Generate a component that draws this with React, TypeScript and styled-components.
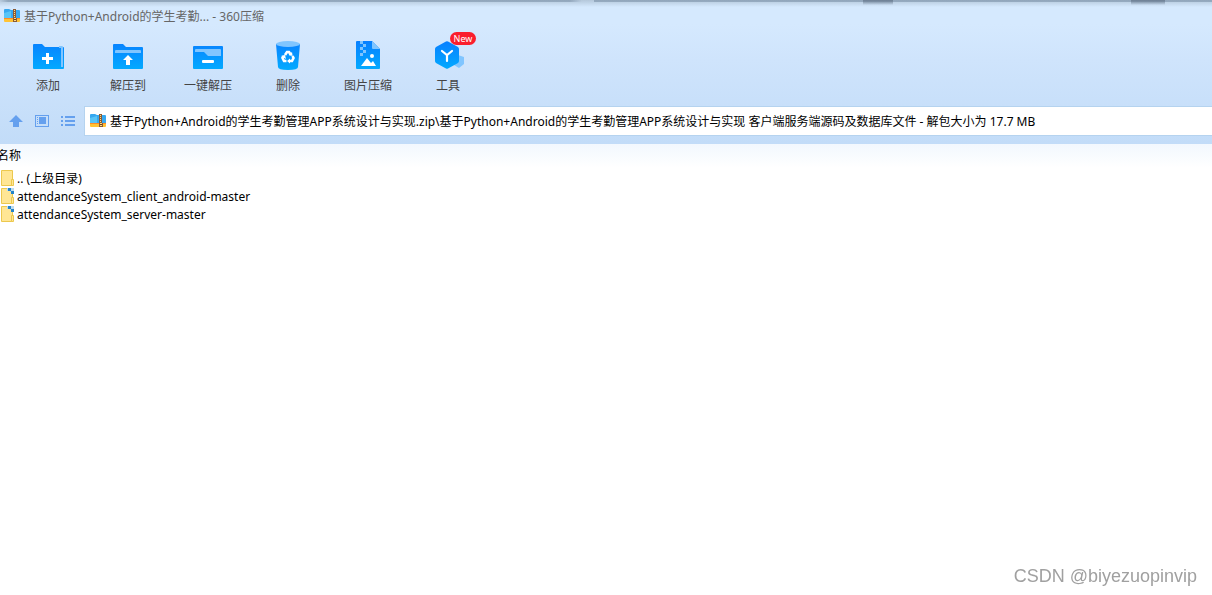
import React from "react";
import styled, { createGlobalStyle } from "styled-components";

const GlobalStyle = createGlobalStyle`
  * { box-sizing: border-box; }
  html, body, #root { height: 100%; }
  body {
    margin: 0;
    background: #fff;
    color: #000;
    font: 12px/18px "Noto Sans", "Noto Sans CJK SC", sans-serif;
  }
  button, input { font: inherit; }
  svg { display: block; flex: none; }
`;

const Window = styled.div`
  min-height: 100%;
  display: flex;
  flex-direction: column;
  overflow: hidden;
`;

const Header = styled.header`
  padding-bottom: 8px;
  background:
    radial-gradient(closest-side at 50% 0, #4c648288, transparent) 23% 0 / 16px 6px no-repeat,
    linear-gradient(#6e8095, #6e809500) 73% 0 / 30px 5px no-repeat,
    linear-gradient(#6e8095, #6e809500) 96% 0 / 34px 5px no-repeat,
    linear-gradient(90deg, transparent, #69809877 8px, #69809877 47%, transparent 48%, transparent 49%, #69809877 49%) 0 0 / 100% 2px no-repeat,
    linear-gradient(#b4c7da, #d5e9fe 7px, #d5e9fe 24px, #cfe4fc 60px, #c2dcf8 100%);
`;

const TitleBar = styled.div`
  display: flex;
  align-items: center;
  gap: 4px;
  height: 32px;
  padding: 0 4px;
`;

const Title = styled.h1`
  margin: 0;
  padding-top: 2px;
  color: #666;
  font-size: 12px;
  font-weight: 400;
`;

const Toolbar = styled.nav`
  display: flex;
  height: 74px;
  padding: 0 8px;
`;

const Tool = styled.button`
  position: relative;
  display: flex;
  flex-direction: column;
  align-items: center;
  gap: 5px;
  width: 80px;
  padding: 4px 0 0;
  border: 0;
  background: none;
  color: #444;
`;

const Badge = styled.span`
  position: absolute;
  top: 0;
  left: 42px;
  width: 26px;
  border-radius: 7px;
  background: #fa1e2d;
  color: #fff;
  font-size: 9px;
  line-height: 13px;
`;

const AddressRow = styled.div`
  display: flex;
  align-items: stretch;
  height: 30px;
`;

const NavButtons = styled.div`
  display: flex;
  align-items: center;
  gap: 10px;
  padding: 0 8px;
`;

const NavButton = styled.button`
  padding: 0;
  border: 0;
  background: none;
  color: #65a0ee;
`;

const AddressBox = styled.label`
  display: flex;
  flex: 1;
  align-items: center;
  gap: 4px;
  padding-left: 5px;
  border: solid #b5d3ef;
  border-width: 1px 0 1px 1px;
  background: #fff;
`;

const AddressInput = styled.input`
  flex: 1;
  min-width: 0;
  padding: 2px 0 0;
  border: 0;
  outline: 0;
  background: none;
  color: #000;
`;

const FileArea = styled.main`
  flex: 1;
  background: linear-gradient(#f2f8fe, #fff 24px);
`;

const FileTable = styled.table`
  width: 100%;
  margin-left: -3px;
  border-collapse: collapse;
`;

const ColumnHeader = styled.th`
  height: 25px;
  padding: 0 0 2px;
  font-weight: 400;
  text-align: left;
`;

const NameCell = styled.td`
  height: 18px;
  padding: 0 0 0 4px;
`;

const FileName = styled.span`
  display: flex;
  align-items: center;
  gap: 2px;
  height: 18px;
`;

const FileLabel = styled.span`
  padding-top: 2px;
`;

const Watermark = styled.footer`
  position: fixed;
  right: 15px;
  bottom: 7px;
  color: #a0a0a0;
  font: 18px/24px "Liberation Sans", Arial, sans-serif;
`;

const ArchiveIcon = () => (
  <svg width="16" height="16" viewBox="0 0 16 16" aria-hidden="true">
    <path d="M0 2Q0 1 1 1H5L7 2H15Q16 2 16 3V13H0Z" fill="#36a8f0" />
    <path d="M0 5 7 3V13H0Z" fill="#58c5f7" />
    <path d="M0 10H16V11H0Z" fill="#ff8a25" />
    <path d="M0 11H16V13Q16 14 15 14H1Q0 14 0 13Z" fill="#ffc334" />
    <path d="M9 1H12V10H13V14H9Z" fill="#8a5a35" />
    <path d="M10 2H11V3H10ZM10 4H11V5H10ZM10 6H11V7H10ZM10 8H11V9H10ZM10 10H12V13H10Z" fill="#ffdd80" />
    <path d="M10 11H12V12H10Z" fill="#684126" />
  </svg>
);

const ToolSvg = ({ children }: { children: React.ReactNode }) => (
  <svg width="36" height="36" viewBox="0 0 36 36" aria-hidden="true">
    <defs>
      <linearGradient id="tool-blue" x1="0" y1="5" x2="0" y2="33" gradientUnits="userSpaceOnUse">
        <stop stopColor="#087fff" />
        <stop offset="1" stopColor="#03a9ff" />
      </linearGradient>
    </defs>
    {children}
  </svg>
);

const AddIcon = () => (
  <ToolSvg>
    <path d="M3 9Q3 8 4 8H12L15 11H32Q33 11 33 12V32Q33 33 32 33H4Q3 33 3 32Z" fill="url(#tool-blue)" />
    <path d="M30 11H33Q34 11 34 12V32Q34 33 33 33H30Z" fill="url(#tool-blue)" />
    <path d="M29 10H32Q33 10 33 11V31H31V12H29Z" fill="#80c5ff" />
    <path d="M16 17H19V21H23V24H19V28H16V24H12V21H16Z" fill="#fff" />
  </ToolSvg>
);

const ExtractIcon = () => (
  <ToolSvg>
    <path d="M3 9Q3 8 4 8H13L16 11H32Q33 11 33 12V32Q33 33 32 33H4Q3 33 3 32Z" fill="url(#tool-blue)" />
    <path d="M5 17V15Q5 14 6 14H30Q31 14 31 15V17Z" fill="#80c5ff" />
    <path d="M18 19 23 24H20V29H16V24H13Z" fill="#fff" />
  </ToolSvg>
);

const OneClickIcon = () => (
  <ToolSvg>
    <rect x="3" y="10" width="30" height="23" rx="1" fill="url(#tool-blue)" />
    <path d="M5 16V14Q5 13 6 13H30Q31 13 31 14V20H18L14 16Z" fill="#80c5ff" />
    <rect x="12" y="24" width="12" height="3" rx="1" fill="#fff" />
  </ToolSvg>
);

const DeleteIcon = () => (
  <ToolSvg>
    <path d="M6 8H30L28 31Q28 34 18 34T8 31Z" fill="url(#tool-blue)" />
    <ellipse cx="18" cy="8" rx="12" ry="3" fill="#80c5ff" />
    <g fill="none" stroke="#fff" strokeWidth="2.6">
      <path d="m15 19 2-3h2l2 3M22.5 20l1 2-1.5 3h-3M16.5 25H14l-1.5-3 1.5-2" />
    </g>
    <path d="m22 16 .6 4-4-1ZM20 22.5v5l-3-2.5ZM11 20l4-1 1 4Z" fill="#fff" />
  </ToolSvg>
);

const ImageIcon = () => (
  <ToolSvg>
    <path d="M6 6Q6 5 7 5H22L30 13V32Q30 33 29 33H7Q6 33 6 32Z" fill="url(#tool-blue)" />
    <path d="M22 5 30 13H23Q22 13 22 12Z" fill="#80c5ff" />
    <path d="M10 5H13V8H10ZM13 8H16V11H13ZM10 11H13V14H10ZM10 17H13V20H10ZM13 14H16V17H13Z" fill="#80c5ff" />
    <path d="m11 30 6-8 4 5 2-2 3 5Z" fill="#fff" />
    <circle cx="22" cy="20" r="2" fill="#fff" />
  </ToolSvg>
);

const ToolsIcon = () => (
  <ToolSvg>
    <path d="m28 19 6 2v7l-5 4-5-3Z" fill="#80c5ff" />
    <path d="M16 5.5Q17 5 18 5.5L28 11Q29 12 29 13V25Q29 26 28 27L18 32.5Q17 33 16 32.5L6 27Q5 26 5 25V13Q5 12 6 11Z" fill="url(#tool-blue)" />
    <path d="m12 15 5 4 5-4M17 19v6" fill="none" stroke="#fff" strokeWidth="2.2" strokeLinecap="round" />
  </ToolSvg>
);

const UpIcon = () => (
  <svg width="16" height="16" viewBox="0 0 16 16" fill="currentColor" aria-hidden="true">
    <path d="M8 2 15 9H11V14H5V9H1Z" />
  </svg>
);

const PreviewIcon = () => (
  <svg width="16" height="16" viewBox="0 0 16 16" fill="currentColor" aria-hidden="true">
    <path d="M1 2H15V14H1ZM2 3V13H14V3Z" fillRule="evenodd" />
    <path d="M5 4H12V11H5ZM3 4H4V5H3ZM3 6H4V7H3ZM3 8H4V9H3ZM3 10H4V11H3Z" />
  </svg>
);

const ListIcon = () => (
  <svg width="16" height="16" viewBox="0 0 16 16" fill="currentColor" aria-hidden="true">
    <path d="M1 3H3V5H1ZM5 3H15V5H5ZM1 7H3V9H1ZM5 7H15V9H5ZM1 11H3V13H1ZM5 11H15V13H5Z" />
  </svg>
);

const FolderIcon = ({ marked }: { marked: boolean }) => (
  <svg width="14" height="16" viewBox="0 0 14 16" aria-hidden="true">
    <path d="M.5.5H11.5V15.5H.5Z" fill="#ffe695" stroke="#ecc84e" />
    <path d="M10.5 9.5H12.5V15.5H10.5Z" fill="#ffe695" stroke="#ecc84e" />
    {marked && (
      <>
        <path d="M6 0H13V6H11V4H9V3H6Z" fill="#bedcf0" />
        <path d="M7 0H10V3H7ZM10 3H13V6H10Z" fill="#2584c8" />
      </>
    )}
  </svg>
);

const tools = [
  { label: "添加", Icon: AddIcon },
  { label: "解压到", Icon: ExtractIcon },
  { label: "一键解压", Icon: OneClickIcon },
  { label: "删除", Icon: DeleteIcon },
  { label: "图片压缩", Icon: ImageIcon },
  { label: "工具", Icon: ToolsIcon, badge: "New" },
];

const files = [
  { name: ".. (上级目录)", marked: false },
  { name: "attendanceSystem_client_android-master", marked: true },
  { name: "attendanceSystem_server-master", marked: true },
];

const address =
  "基于Python+Android的学生考勤管理APP系统设计与实现.zip\\基于Python+Android的学生考勤管理APP系统设计与实现 客户端服务端源码及数据库文件 - 解包大小为 17.7 MB";

export default function App() {
  return (
    <Window>
      <GlobalStyle />
      <Header>
        <TitleBar>
          <ArchiveIcon />
          <Title>基于Python+Android的学生考勤... - 360压缩</Title>
        </TitleBar>
        <Toolbar aria-label="工具栏">
          {tools.map(({ label, Icon, badge }) => (
            <Tool key={label} type="button">
              <Icon />
              {label}
              {badge && <Badge>{badge}</Badge>}
            </Tool>
          ))}
        </Toolbar>
        <AddressRow>
          <NavButtons>
            <NavButton type="button" aria-label="向上"><UpIcon /></NavButton>
            <NavButton type="button" aria-label="预览"><PreviewIcon /></NavButton>
            <NavButton type="button" aria-label="列表"><ListIcon /></NavButton>
          </NavButtons>
          <AddressBox>
            <ArchiveIcon />
            <AddressInput aria-label="地址" defaultValue={address} />
          </AddressBox>
        </AddressRow>
      </Header>
      <FileArea>
        <FileTable>
          <thead>
            <tr><ColumnHeader scope="col">名称</ColumnHeader></tr>
          </thead>
          <tbody>
            {files.map(({ name, marked }) => (
              <tr key={name}>
                <NameCell>
                  <FileName>
                    <FolderIcon marked={marked} />
                    <FileLabel>{name}</FileLabel>
                  </FileName>
                </NameCell>
              </tr>
            ))}
          </tbody>
        </FileTable>
      </FileArea>
      <Watermark>CSDN @biyezuopinvip</Watermark>
    </Window>
  );
}
